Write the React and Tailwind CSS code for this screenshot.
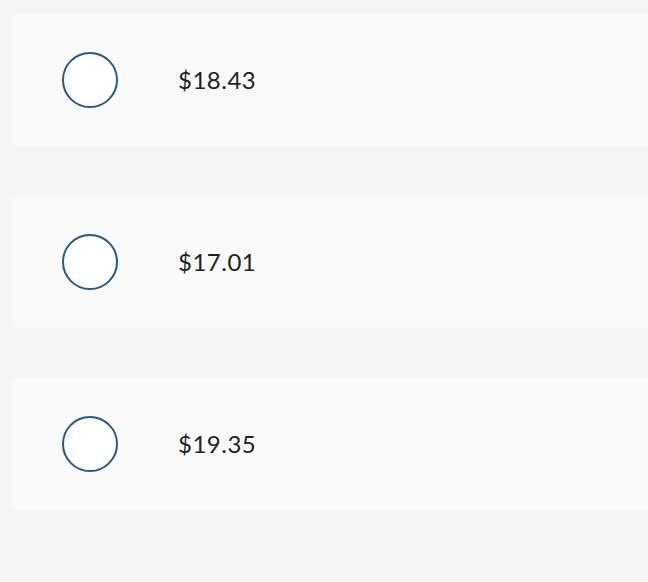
export default function App() {
  const items = ["$18.43", "$17.01", "$19.35"];
  return (
    <div className="w-[648px] h-[582px] overflow-hidden bg-[#f5f5f5]" style={{ fontFamily: "Lato, 'Open Sans', sans-serif" }}>
      <div className="w-[700px] pl-[12px] pt-[14px] flex flex-col gap-[50px]">
        {items.map((p) => (
          <div key={p} className="h-[132px] rounded-[5px] bg-[#fafafa] flex items-center pl-[50px]">
            <div className="w-[56px] h-[56px] rounded-full border-2 border-[#265a8c] bg-white shrink-0" />
            <div className="ml-[60px] text-[24px] text-[#222222] tracking-[0.5px]">{p}</div>
          </div>
        ))}
      </div>
    </div>
  );
}
